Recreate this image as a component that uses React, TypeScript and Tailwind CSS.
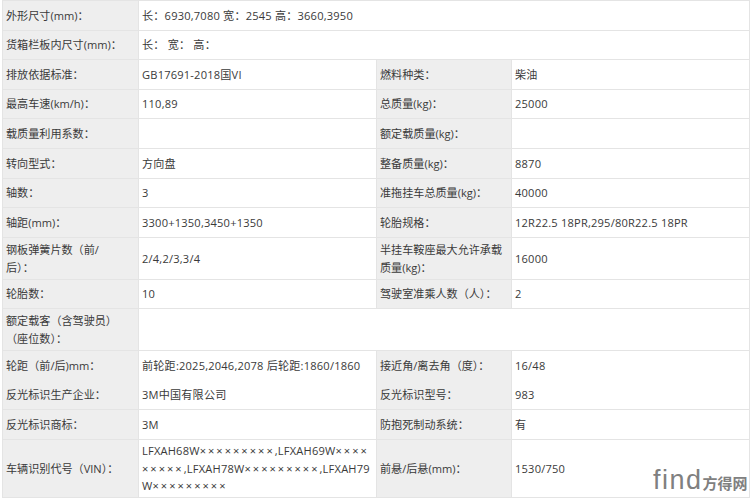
// App.tsx
type Row = {
  h: string;
  cells: string[];
  noLine?: boolean;
};

const rows: Row[] = [
  { h: "h-[30px]", cells: ["外形尺寸(mm)：", "长：6930,7080 宽：2545 高：3660,3950"] },
  { h: "h-[29px]", cells: ["货箱栏板内尺寸(mm)：", "长： 宽： 高："] },
  { h: "h-[30px]", cells: ["排放依据标准：", "GB17691-2018国VI", "燃料种类：", "柴油"] },
  { h: "h-[29px]", cells: ["最高车速(km/h)：", "110,89", "总质量(kg)：", "25000"] },
  { h: "h-[30px]", cells: ["载质量利用系数：", "", "额定载质量(kg)：", ""] },
  { h: "h-[30px]", cells: ["转向型式：", "方向盘", "整备质量(kg)：", "8870"] },
  { h: "h-[29px]", cells: ["轴数：", "3", "准拖挂车总质量(kg)：", "40000"] },
  { h: "h-[30px]", cells: ["轴距(mm)：", "3300+1350,3450+1350", "轮胎规格：", "12R22.5 18PR,295/80R22.5 18PR"] },
  { h: "h-[42px]", cells: ["钢板弹簧片数（前/\n后）：", "2/4,2/3,3/4", "半挂车鞍座最大允许承载\n质量(kg)：", "16000"] },
  { h: "h-[29px]", cells: ["轮胎数：", "10", "驾驶室准乘人数（人）：", "2"] },
  { h: "h-[42px]", cells: ["额定载客（含驾驶员）\n（座位数）：", ""] },
  { h: "h-[30px]", noLine: true, cells: ["轮距（前/后)mm：", "前轮距:2025,2046,2078 后轮距:1860/1860", "接近角/离去角（度）：", "16/48"] },
  { h: "h-[29px]", cells: ["反光标识生产企业：", "3M中国有限公司", "反光标识型号：", "983"] },
  { h: "h-[30px]", cells: ["反光标识商标：", "3M", "防抱死制动系统：", "有"] },
  {
    h: "h-[58px]",
    cells: [
      "车辆识别代号（VIN）：",
      "LFXAH68W×××××××××,LFXAH69W××××\n×××××,LFXAH78W×××××××××,LFXAH79\nW×××××××××",
      "前悬/后悬(mm)：",
      "1530/750",
    ],
  },
];

// the masked VIN characters sit wider apart than the rest of the text
function Value({ text }: { text: string }) {
  return (
    <>
      {text.split("\n").map((line, l) => (
        <div key={l}>
          {line.split(/(×+)/).map((part, i) =>
            part.startsWith("×") ? (
              <span key={i} className="tracking-[2px]">
                {part}
              </span>
            ) : (
              part
            ),
          )}
        </div>
      ))}
    </>
  );
}

function SpecRow({ row }: { row: Row }) {
  const line = row.noLine ? "border-b-0" : "border-b";
  const label = `bg-[#eeeeee] pl-[3px] leading-[17.5px] whitespace-pre-line border-x border-t-0 border-[#e4e4e4] ${line}`;
  const value = `pl-[3px] leading-[17.5px] tracking-[0.2px] border-x border-t-0 border-[#e4e4e4] ${line}`;
  return (
    <tr className={row.h}>
      {row.cells.map((text, i) =>
        i % 2 === 0 ? (
          <td key={i} className={label}>
            {text}
          </td>
        ) : (
          <td key={i} className={value} colSpan={row.cells.length === 2 ? 3 : 1}>
            <Value text={text} />
          </td>
        ),
      )}
    </tr>
  );
}

export default function App() {
  return (
    <div className="relative w-[750px] h-[498px] overflow-hidden bg-white pl-[2px] font-['Open_Sans','Noto_Sans_CJK_SC',sans-serif] text-[11.1px] text-[#3a3a3a]">
      <table className="w-[747px] table-fixed border-collapse border-t border-[#e4e4e4]">
        <colgroup>
          <col className="w-[136px]" />
          <col className="w-[238px]" />
          <col className="w-[135px]" />
          <col className="w-[238px]" />
        </colgroup>
        <tbody>
          {rows.map((row, i) => (
            <SpecRow key={i} row={row} />
          ))}
        </tbody>
      </table>

      {/* watermark */}
      <div className="absolute left-[653px] top-[466px] flex items-end whitespace-nowrap text-[#808080] [text-shadow:0_0_2px_#fff]">
        <span className="font-['Liberation_Sans',sans-serif] text-[27px] leading-[28px] tracking-[1.5px]">find</span>
        <span className="pb-[1px] text-[15px] leading-[20px] font-bold">方得网</span>
      </div>
    </div>
  );
}
